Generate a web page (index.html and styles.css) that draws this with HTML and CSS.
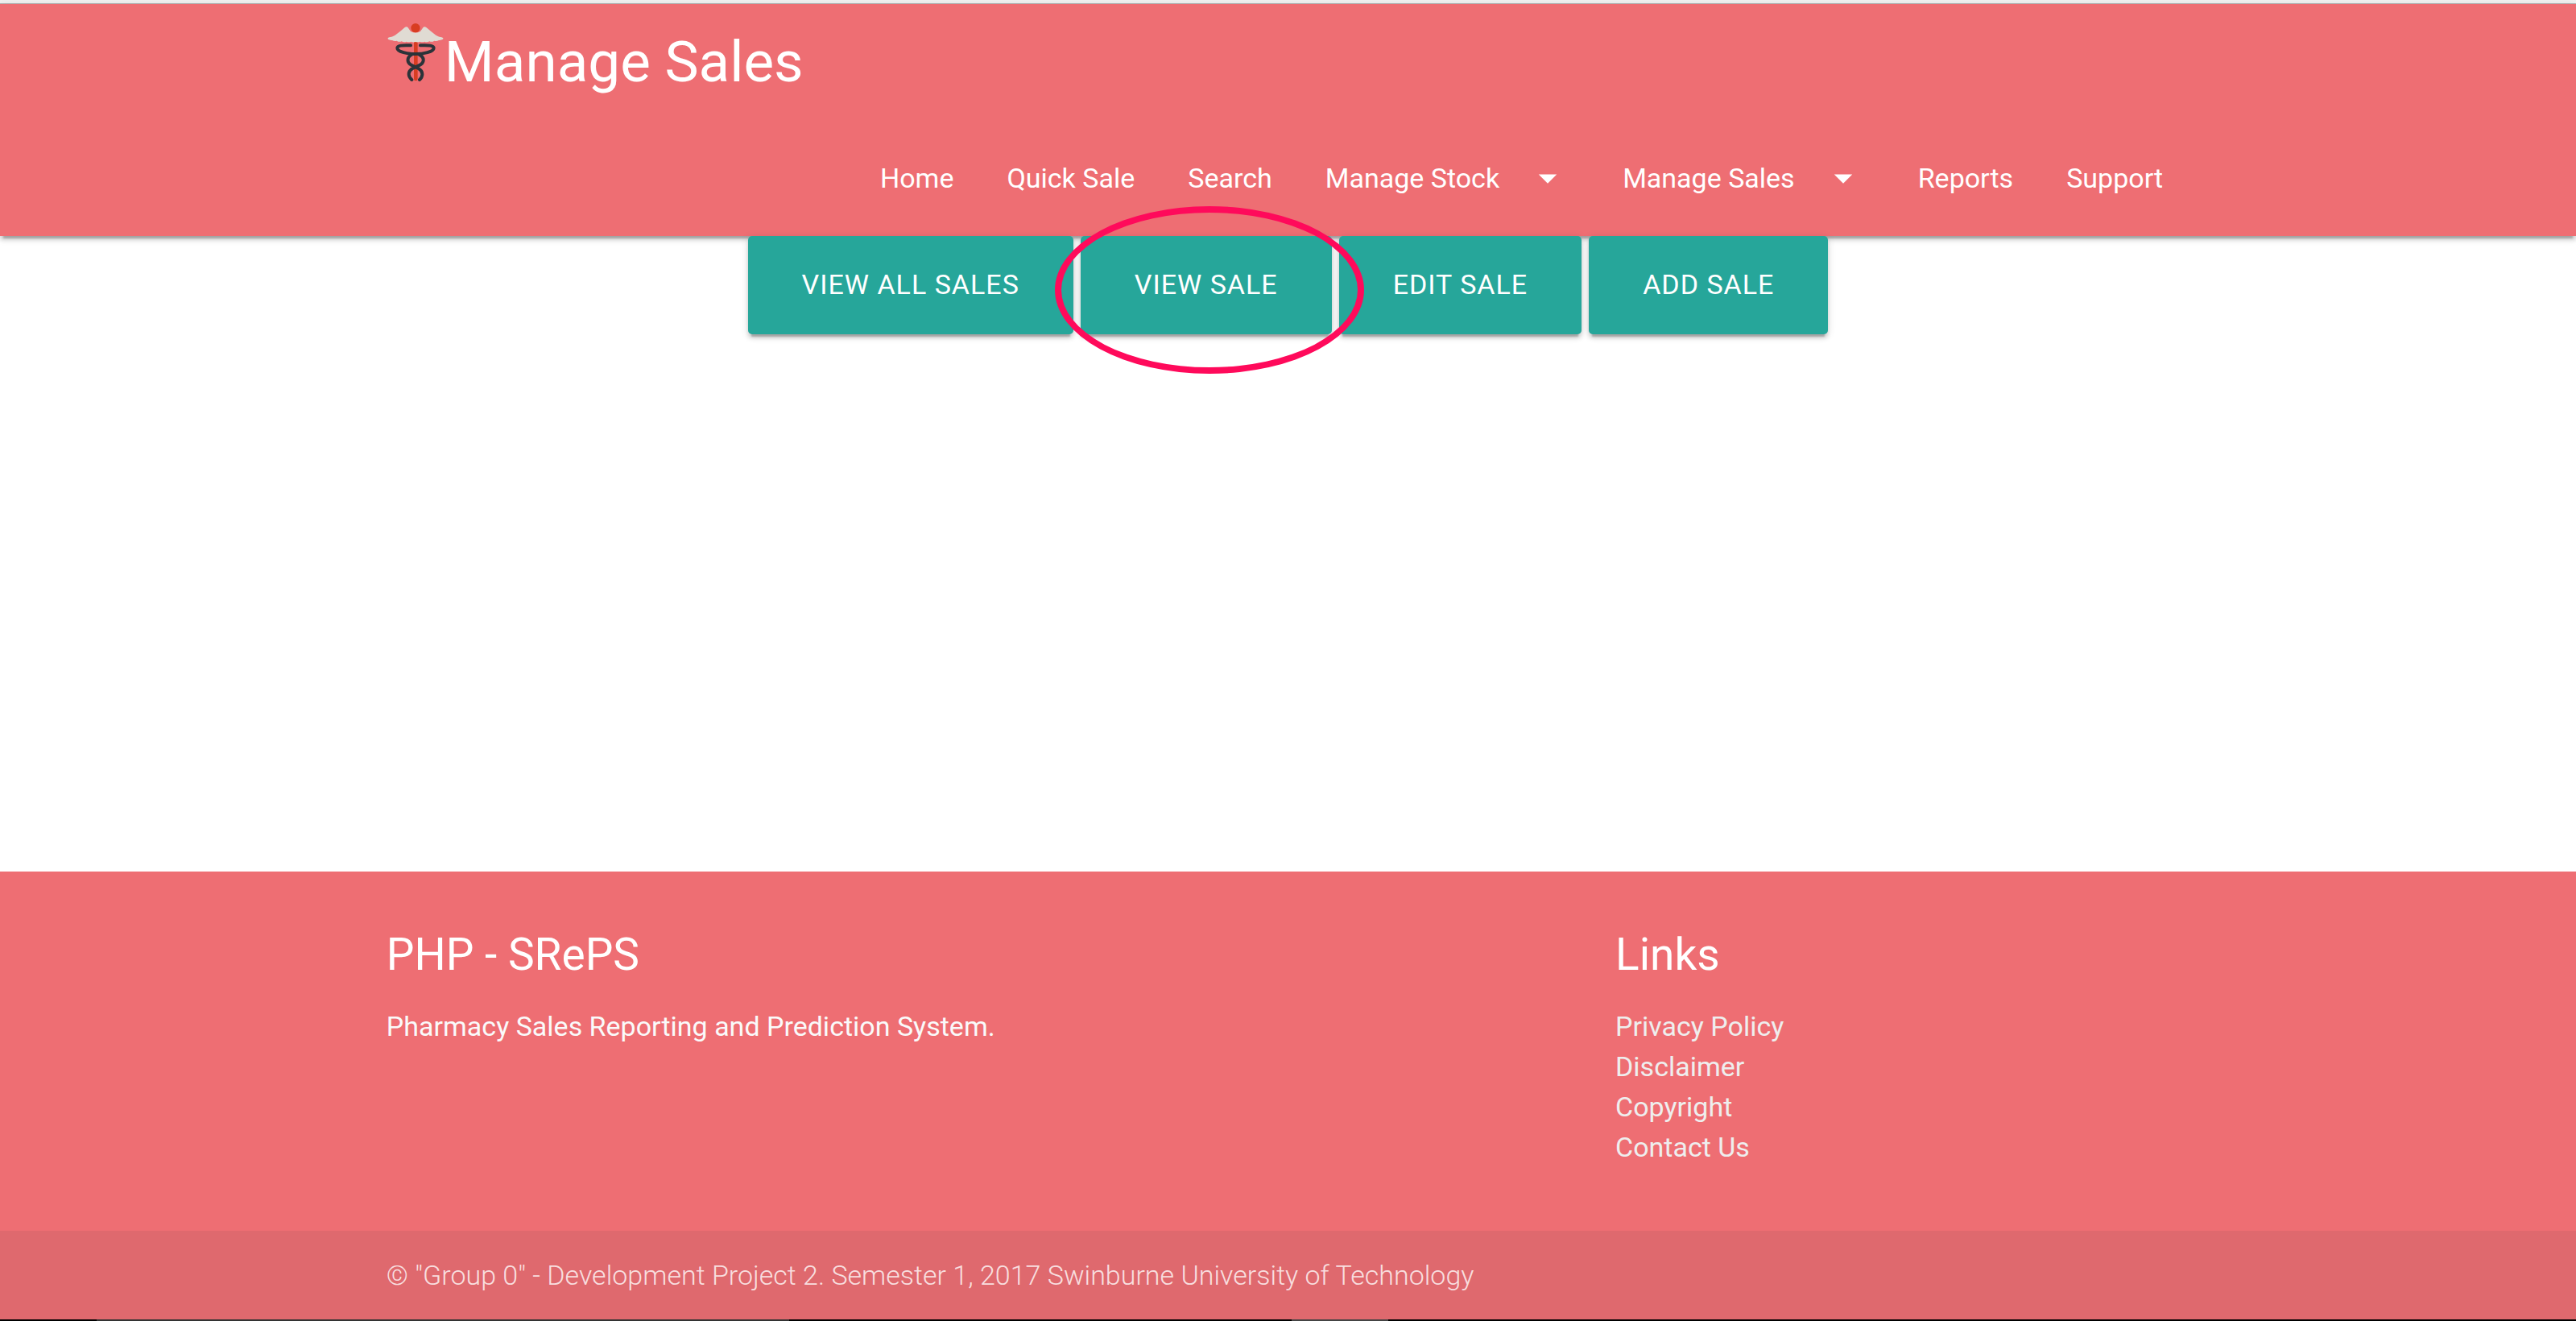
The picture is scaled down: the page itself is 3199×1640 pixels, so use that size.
FILE: index.html
```html
<!DOCTYPE html>
<html lang="en">
<head>
  <meta charset="utf-8">
  <title>Manage Sales</title>
  <link rel="stylesheet" href="styles.css">
</head>
<body>
  <div class="window-edge"></div>
  <header class="header">
    <nav class="container">
      <a class="brand" href="#"><svg class="brand-icon" viewBox="30 27 216 216" aria-hidden="true">
          <rect x="132" y="90" width="14" height="151" rx="7" fill="#d83d22"/>
          <g fill="none" stroke="#2b3339" stroke-width="12" stroke-linecap="round">
            <path d="M120 109C88 107 70 110 70 119C70 133 110 141 138 141C166 141 206 133 206 119C206 110 188 107 156 109"/>
            <path d="M126 142C104 153 104 174 126 184L150 196C167 206 167 224 153 237"/>
            <path d="M150 142C173 153 173 174 150 184L126 196C109 206 109 224 124 237"/>
          </g>
          <path fill="#e0dbd3" d="M35 82C37 77 50 79 62 71C77 61 90 49 98 42C103 38 108 39 111 44L120 57Q138 66 156 57L165 44C168 39 173 38 178 42C187 49 200 61 214 71C226 79 239 77 241 82C242 88 234 88 225 90Q216 95 208 92Q199 98 190 94Q180 99 172 95Q163 99 155 95Q147 99 138 96Q129 99 121 95Q113 99 104 95Q96 99 86 94Q77 98 68 92Q60 95 51 90C42 88 34 88 35 82Z"/>
          <circle cx="138" cy="44" r="17" fill="#d83d22"/>
        </svg>Manage Sales</a>
      <ul class="menu">
        <li><a href="#">Home</a></li>
        <li><a href="#">Quick Sale</a></li>
        <li><a href="#">Search</a></li>
        <li><a href="#">Manage Stock<svg class="caret" viewBox="0 0 24 24" aria-hidden="true"><path d="M7 10l5 5 5-5z"/></svg></a></li>
        <li><a href="#">Manage Sales<svg class="caret" viewBox="0 0 24 24" aria-hidden="true"><path d="M7 10l5 5 5-5z"/></svg></a></li>
        <li><a href="#">Reports</a></li>
        <li><a href="#">Support</a></li>
      </ul>
    </nav>
  </header>

  <main class="actions">
    <button class="btn" type="button">View all sales</button>
    <div class="marked">
      <button class="btn" type="button">View sale</button>
      <span class="ring"></span>
    </div>
    <button class="btn" type="button">Edit sale</button>
    <button class="btn" type="button">Add sale</button>
  </main>

  <footer class="footer">
    <div class="container">
      <div class="footer-columns">
        <section class="column">
          <h5 class="footer-title">PHP - SRePS</h5>
          <p class="about">Pharmacy Sales Reporting and Prediction System.</p>
        </section>
        <section class="column">
          <h5 class="footer-title">Links</h5>
          <ul class="links">
            <li><a href="#">Privacy Policy</a></li>
            <li><a href="#">Disclaimer</a></li>
            <li><a href="#">Copyright</a></li>
            <li><a href="#">Contact Us</a></li>
          </ul>
        </section>
      </div>
    </div>
    <div class="copyright">
      <div class="container">© "Group 0" - Development Project 2. Semester 1, 2017 Swinburne University of Technology</div>
    </div>
  </footer>
  <div class="desktop-edge"></div>
</body>
</html>
```

FILE: styles.css
```css
* {
  box-sizing: border-box;
}

body {
  display: flex;
  flex-direction: column;
  min-height: 100vh;
  margin: 0;
  background: #fff;
  color: #fff;
  font-family: Roboto, sans-serif;
  font-size: 34px;
  line-height: 50px;
}

a {
  color: inherit;
  text-decoration: none;
}

ul {
  margin: 0;
  padding: 0;
  list-style: none;
}

.container {
  width: 70%;
  margin: 0 auto;
}

.window-edge {
  height: 5px;
  border-bottom: 1px solid #b5b5b5;
  background: #f1f1f1;
}

.header,
.btn {
  box-shadow: 0 5px 5px rgba(0, 0, 0, 0.14), 0 2px 11px rgba(0, 0, 0, 0.12), 0 7px 2px -4px rgba(0, 0, 0, 0.2);
}

.header {
  background: #ee6e73;
}

.brand {
  display: block;
  height: 144px;
  font-size: 71px;
  line-height: 144px;
}

.brand-icon {
  width: 72px;
  height: 72px;
}

.menu {
  display: flex;
  justify-content: flex-end;
}

.menu a {
  display: flex;
  align-items: center;
  height: 144px;
  padding: 0 33px;
}

.caret {
  width: 54px;
  height: 54px;
  margin-left: 33px;
  fill: currentColor;
}

.actions {
  display: flex;
  flex: 1;
  align-items: flex-start;
  justify-content: center;
  gap: 9px;
}

.btn {
  display: block;
  position: relative;
  height: 122px;
  padding: 0 67px 2px;
  border: 0;
  border-radius: 5px;
  background: #26a69a;
  color: #fff;
  font: inherit;
  letter-spacing: 1px;
  text-transform: uppercase;
}

.marked {
  position: relative;
}

/* Highlight drawn over the button and the header */
.ring {
  position: absolute;
  z-index: 1;
  inset: -37px -40px -49px -32px;
  border: 8px solid #ff0a5b;
  border-radius: 50%;
  pointer-events: none;
}

.footer {
  background: #ee6e73;
}

.footer-columns {
  display: grid;
  grid-template-columns: 2fr 1fr;
  margin: 0 -25px;
  padding: 73px 0 79px;
}

.column {
  padding: 0 25px;
}

.footer-title {
  margin: 0 0 34px;
  font-size: 55px;
  font-weight: 400;
  line-height: 60px;
}

.about {
  margin: 0;
  color: #fafafa;
}

.links {
  color: #eee;
}

.copyright {
  background: rgba(51, 51, 51, 0.08);
  color: rgba(255, 255, 255, 0.8);
  font-weight: 300;
  line-height: 110px;
}

.desktop-edge {
  height: 2px;
  background: linear-gradient(90deg, #000 120px, #333 120px 980px, #000 980px 1604px, #444 1604px 1724px, #000 1724px);
}
```
